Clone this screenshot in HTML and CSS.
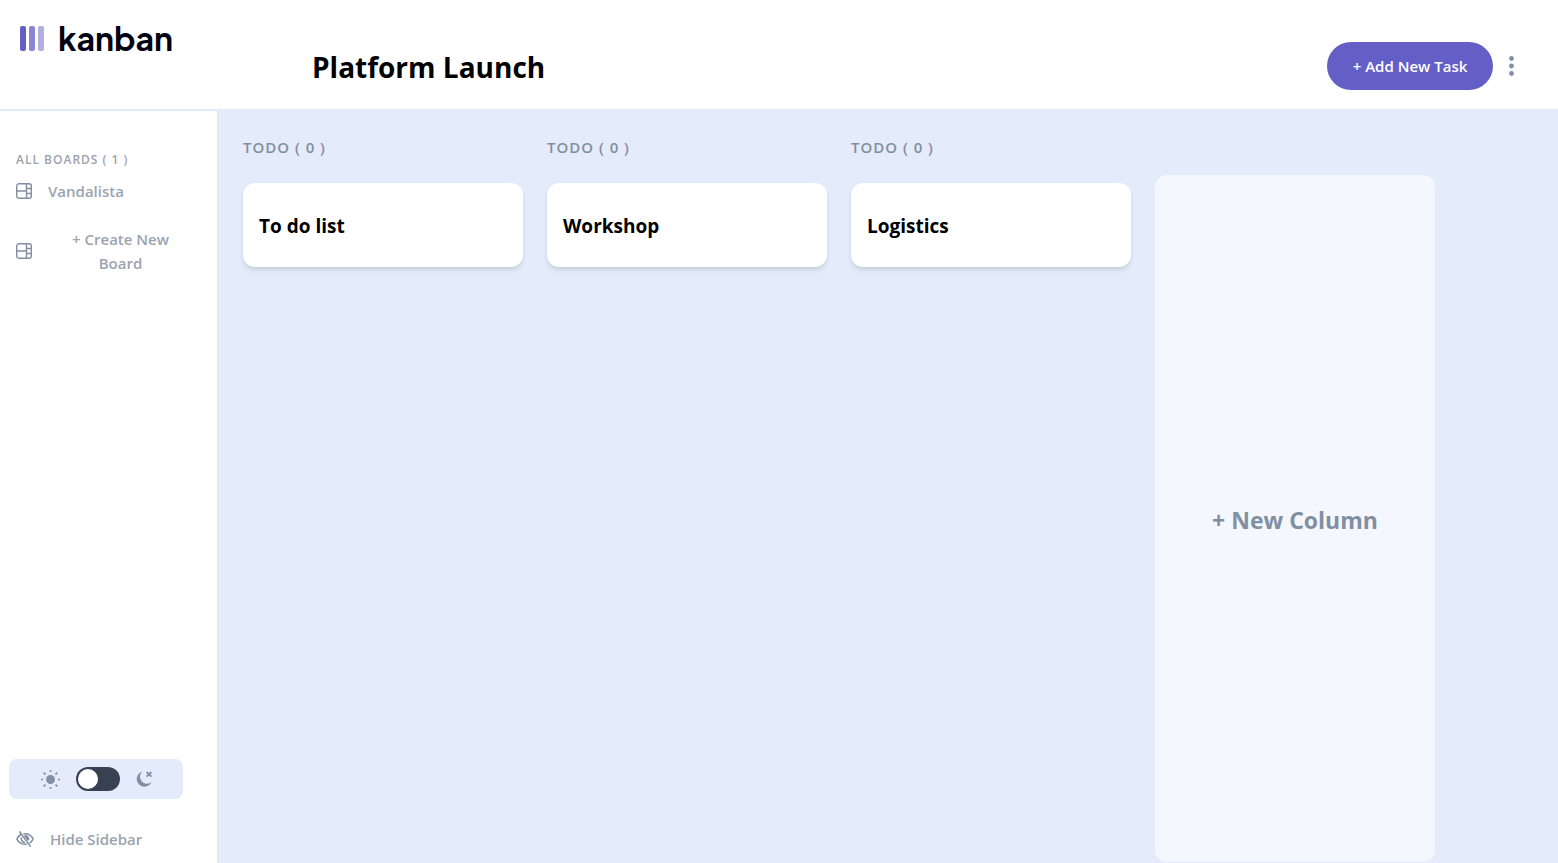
FILE: index.html
```html
<!DOCTYPE html>
<html lang="en">
<head>
<meta charset="utf-8">
<meta name="viewport" content="width=device-width, initial-scale=1">
<title>Kanban</title>
<link rel="stylesheet" href="styles.css">
</head>
<body class="app">
<header class="header">
  <div class="brand">
    <svg class="brand-mark" width="24" height="25" viewBox="0 0 24 25" aria-hidden="true">
      <rect width="6" height="25" rx="2" fill="#635fc7"/>
      <rect x="9" width="6" height="25" rx="2" fill="#8986d6"/>
      <rect x="18" width="6" height="25" rx="2" fill="#b1aee2"/>
    </svg>
    <span class="brand-name">kanban</span>
  </div>
  <h1 class="title">Platform Launch</h1>
  <div class="actions">
    <button class="add-task" type="button">+ Add New Task</button>
    <button class="more" type="button" aria-label="Board menu">
      <svg width="5" height="20" viewBox="0 0 5 20" fill="#828fa3" aria-hidden="true">
        <circle cx="2.5" cy="2.5" r="2.4"/><circle cx="2.5" cy="10" r="2.4"/><circle cx="2.5" cy="17.5" r="2.4"/>
      </svg>
    </button>
  </div>
</header>
<div class="body">
  <aside class="sidebar">
    <h2 class="boards-heading">ALL BOARDS ( 1 )</h2>
    <nav class="boards">
      <button class="board-link" type="button">
        <svg class="icon" width="16" height="16" viewBox="0 0 16 16" fill="none" stroke="#828fa3" stroke-width="1.4" aria-hidden="true">
          <rect x=".7" y=".7" width="14.6" height="14.6" rx="2.3"/><path d="M10.5.7v14.6M.7 8h9.8M10.5 5.5h4.8M10.5 10.5h4.8"/>
        </svg>
        <span>Vandalista</span>
      </button>
      <button class="board-link" type="button">
        <svg class="icon" width="16" height="16" viewBox="0 0 16 16" fill="none" stroke="#828fa3" stroke-width="1.4" aria-hidden="true">
          <rect x=".7" y=".7" width="14.6" height="14.6" rx="2.3"/><path d="M10.5.7v14.6M.7 8h9.8M10.5 5.5h4.8M10.5 10.5h4.8"/>
        </svg>
        <span class="create-label">+ Create New Board</span>
      </button>
    </nav>
    <div class="theme">
      <svg class="icon" width="19" height="19" viewBox="0 0 18 18" fill="#828fa3" stroke="#828fa3" stroke-width="1.5" aria-hidden="true">
        <circle cx="9" cy="9" r="4.2" stroke="none"/>
        <path d="M9 0v2M9 16v2M0 9h2M16 9h2M2.500 2.500l1.800 1.800M13.700 13.700l1.800 1.800M15.500 2.500l-1.800 1.800M4.300 13.700l-1.800 1.800"/>
      </svg>
      <input class="switch" type="checkbox" role="switch" aria-label="Dark mode">
      <svg class="icon" width="16" height="16" viewBox="0 0 16 16" aria-hidden="true">
        <path d="M6.400.5A7.700 7.700 0 1 0 15.500 11 6.800 6.800 0 0 1 6.400.5z" fill="#828fa3"/>
        <path d="M10.600 1l4.800 4.600M15.400 1l-4.800 4.600" stroke="#828fa3" stroke-width="1.8"/>
      </svg>
    </div>
    <button class="hide" type="button">
      <svg class="icon" width="18" height="16" viewBox="0 0 18 16" fill="none" stroke="#828fa3" stroke-width="1.6" aria-hidden="true">
        <path d="M5.200 3.200C3.400 4.300 1.800 6 .9 8c1.400 3 4.300 5.200 8.100 5.200.6 0 1.200-.1 1.800-.2M7.500 2.900C8 2.800 8.500 2.800 9 2.800c3.800 0 6.700 2.200 8.100 5.200-.8 1.700-2 3.200-3.500 4.100"/>
        <path d="M5.500 6.200C4.600 8.700 6.300 11.400 9 11.500M8.500 4.700c2.700-.3 4.700 2 4 4.600"/>
        <path d="M8.200 5.200l3.800 4.700.700-2.900-2-2.300z" fill="#828fa3" stroke="none"/>
        <path d="M3.400.4l11.200 15.200"/>
      </svg>
      <span>Hide Sidebar</span>
    </button>
  </aside>
  <main class="columns">
    <section class="column">
      <h2 class="column-heading">TODO ( 0 )</h2>
      <article class="card"><h3 class="card-title">To do list</h3></article>
    </section>
    <section class="column">
      <h2 class="column-heading">TODO ( 0 )</h2>
      <article class="card"><h3 class="card-title">Workshop</h3></article>
    </section>
    <section class="column">
      <h2 class="column-heading">TODO ( 0 )</h2>
      <article class="card"><h3 class="card-title">Logistics</h3></article>
    </section>
    <button class="new-column" type="button">+ New Column</button>
  </main>
</div>
</body>
</html>
```
FILE: styles.css
```css
* {
  box-sizing: border-box;
}

.app {
  display: flex;
  flex-direction: column;
  min-height: 100vh;
  margin: 0;
  background: #e4ebfa;
  color: #000;
  font-family: "Segoe UI", "Open Sans", "Noto Sans", sans-serif;
  font-size: 15px;
  line-height: 24px;
}

h1, h2, h3 {
  margin: 0;
}

button {
  padding: 0;
  border: 0;
  background: none;
  color: inherit;
  font: inherit;
  cursor: pointer;
}

.icon {
  flex: none;
}

.header {
  display: flex;
  align-items: flex-start;
  padding: 20px 40px 19px 20px;
  border-bottom: 2px solid #e4ebfa;
  background: #fff;
}

.brand {
  display: flex;
  align-items: center;
  gap: 14px;
  width: 292px;
  height: 36px;
}

.brand-name {
  color: #000112;
  font-family: "Plus Jakarta Sans", Inter, sans-serif;
  font-size: 32px;
  font-weight: 700;
  line-height: 36px;
}

.title {
  flex: 1;
  padding-top: 27px;
  font-size: 28px;
  font-weight: 700;
  line-height: 40px;
}

.actions {
  display: flex;
  align-items: center;
  gap: 12px;
  padding-top: 22px;
}

.add-task {
  min-width: 166px;
  height: 48px;
  padding: 0 24px;
  border-radius: 24px;
  background: #635fc7;
  color: #fff;
  font-weight: 600;
}

.more {
  display: flex;
  padding: 4px;
}

.body {
  display: flex;
  flex: 1;
}

.sidebar {
  display: flex;
  flex: none;
  flex-direction: column;
  width: 219px;
  padding: 37px 24px 12px 16px;
  border-right: 2px solid #e5e7eb;
  background: #fff;
  color: #9ca3af;
  font-weight: 600;
}

.boards-heading {
  font-size: 12px;
  font-weight: 600;
  letter-spacing: 1px;
}

.boards {
  display: flex;
  flex-direction: column;
  gap: 24px;
  margin-top: 7px;
}

.board-link {
  display: flex;
  align-items: center;
  gap: 16px;
}

.create-label {
  flex: 1;
  padding: 0 16px;
}

.theme {
  display: flex;
  align-items: center;
  justify-content: center;
  gap: 16px;
  width: 174px;
  height: 40px;
  margin: auto 0 28px -7px;
  border-radius: 8px;
  background: #e4ebfa;
}

.switch {
  width: 44px;
  height: 24px;
  margin: 0;
  padding: 2px;
  border-radius: 12px;
  background: #374151;
  appearance: none;
  cursor: pointer;
}

.switch::before {
  display: block;
  width: 20px;
  height: 20px;
  border-radius: 50%;
  background: #fff;
  content: "";
}

.switch:checked::before {
  margin-left: auto;
}

.hide {
  display: flex;
  align-items: center;
  gap: 16px;
}

.columns {
  display: flex;
  flex: 1;
  gap: 24px;
  min-width: 0;
  padding: 24px 24px 1px;
  overflow-x: auto;
}

.column {
  flex: none;
  width: 280px;
}

.column-heading {
  color: #828fa3;
  font-size: 15px;
  font-weight: 600;
  letter-spacing: 1px;
}

.card {
  margin-top: 24px;
  padding: 29px 16px 27px;
  border-radius: 12px;
  background: #fff;
  box-shadow: 0 4px 6px -1px rgba(0, 0, 0, 0.1), 0 2px 4px -2px rgba(0, 0, 0, 0.1);
}

.card-title {
  font-size: 19px;
  font-weight: 700;
  line-height: 28px;
}

.new-column {
  flex: none;
  width: 280px;
  margin-top: 40px;
  padding-top: 3px;
  border-radius: 12px;
  background: #f4f7fe;
  color: #828fa3;
  font-size: 23px;
  font-weight: 700;
}
```
